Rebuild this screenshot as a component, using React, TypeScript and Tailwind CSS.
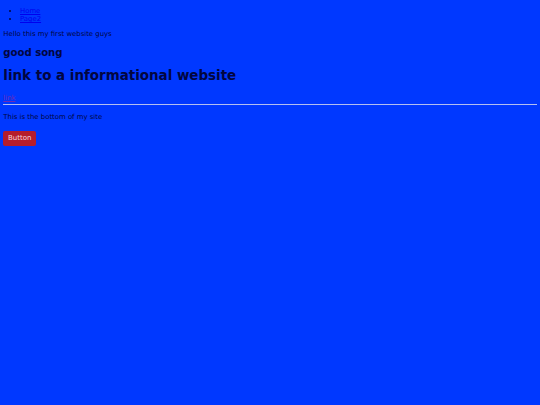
export default function App() {
  return (
    <div
      className="min-h-[405px] w-full bg-[#0038ff] px-[3.33px] pt-[7.2px] text-[#020640]"
      style={{ fontFamily: '"DejaVu Sans", Verdana, sans-serif' }}
    >
      <ul className="list-disc pl-[16.67px] text-[6.9px] leading-[normal]">
        <li>
          <a href="#" className="text-[#0000ee] underline">Home</a>
        </li>
        <li>
          <a href="#" className="text-[#0000ee] underline">Page2</a>
        </li>
      </ul>
      <p className="mt-[6.67px] text-[6.9px] leading-[normal]">Hello this my first website guys</p>
      <h2 className="mt-[9px] text-[10.1px] font-bold leading-[normal]">good song</h2>
      <h1 className="mt-[10.5px] text-[13.45px] font-bold leading-[normal]">link to a informational website</h1>
      <p className="mt-[11px] text-[6.9px] leading-[normal]">
        <a href="#" className="text-[#6a2bb8] underline">link</a>
      </p>
      <hr className="mt-[2px] border-0 border-t border-t-[#b4bff0]" />
      <p className="mt-[7.5px] text-[6.9px] leading-[normal]">This is the bottom of my site</p>
      <div className="mt-[10.5px] flex">
        <button className="flex h-[14.4px] w-[32.8px] items-center justify-center rounded-[2px] bg-[#b51d2c] text-[7px] leading-none text-[#f5d6de]">
          Button
        </button>
      </div>
    </div>
  );
}
